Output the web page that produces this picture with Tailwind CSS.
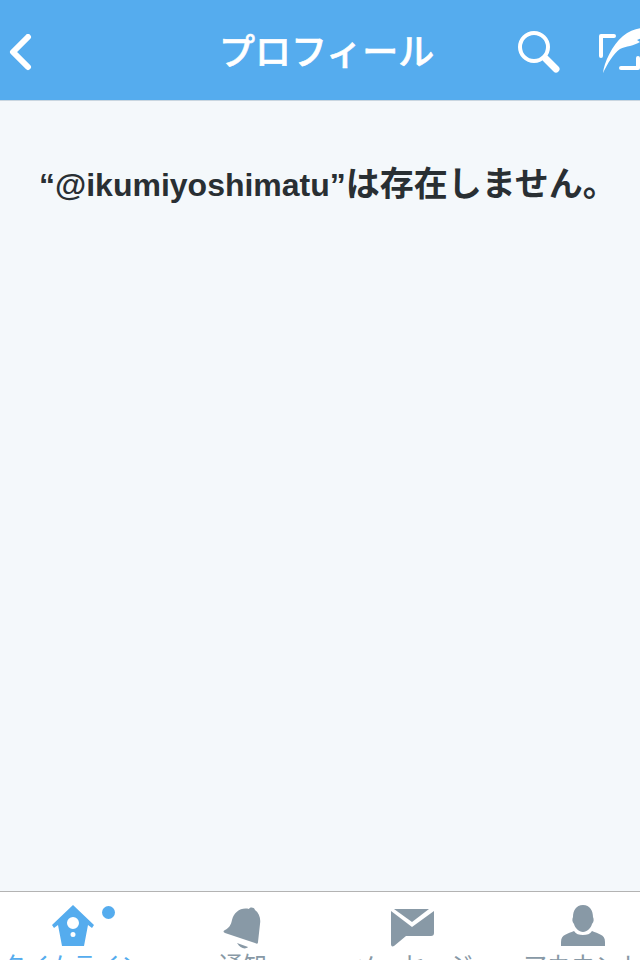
<!DOCTYPE html>
<html lang="ja">
<head>
    <meta charset="UTF-8">
    <meta name="viewport" content="width=device-width, initial-scale=1.0">
    <title>プロフィール</title>
    <script src="https://cdn.jsdelivr.net/npm/@tailwindcss/browser@4"></script>
</head>
<body class="h-[960px] w-[640px] overflow-hidden flex flex-col bg-[#f4f8fb] font-['Liberation_Sans','Noto_Sans_CJK_JP',sans-serif]">
    <header class="h-[101px] shrink-0 flex items-center bg-[#55acee] border-b border-[#c9d6e0] overflow-hidden">
        <svg viewBox="0 0 26 38" class="w-[26px] h-[38px] ml-[7px] mt-[5px] shrink-0">
            <path d="M21 3 L6 18 L21 33" fill="none" stroke="#fff" stroke-width="6" stroke-linecap="round" stroke-linejoin="round" />
        </svg>
        <h1 class="w-[216px] ml-[186px] mt-[6px] shrink-0 text-[36px] leading-[40px] font-medium [-webkit-text-stroke:0.6px_white] text-white whitespace-nowrap">プロフィール</h1>
        <svg viewBox="0 0 44 44" class="w-[44px] h-[44px] ml-[83px] mt-[5px] shrink-0">
            <circle cx="16" cy="16" r="14" fill="none" stroke="#fff" stroke-width="4" />
            <path d="M28 28 L38 38" fill="none" stroke="#fff" stroke-width="7" stroke-linecap="round" />
        </svg>
        <svg viewBox="0 0 44 46" class="w-[44px] h-[46px] ml-[36px] mt-[1px] shrink-0 overflow-visible">
            <path d="M16 8 H3 V28" fill="none" stroke="#fff" stroke-width="4" stroke-linecap="round" stroke-linejoin="round" />
            <path d="M23 40 H40 V30" fill="none" stroke="#fff" stroke-width="4" stroke-linecap="round" stroke-linejoin="round" />
            <path d="M5 45 C6 35 14 17 25 8 C31 3 38 1 44 0 V10 L39 12 L42 14 C36 18 28 18 22 21 C15 26 10 35 5 45 Z" fill="#fff" />
        </svg>
    </header>

    <main class="flex-1 pt-[63px] pl-[39px]">
        <p class="text-[32px] leading-[40px] font-bold text-[#292f33] whitespace-nowrap">“@ikumiyoshimatu”<span class="text-[34px]">は存在しません。</span></p>
    </main>

    <nav class="h-[69px] shrink-0 bg-white border-t border-[#b3b3b3] overflow-hidden">
        <div class="w-[680px] ml-[-12px] grid grid-cols-4 pt-[13px] text-[24px] leading-[24px] text-[#8899a6] text-center whitespace-nowrap">
            <div class="relative flex flex-col items-center text-[#55acee]">
                <svg viewBox="0 0 44 42" class="w-[44px] h-[46px] pb-[4px]">
                    <path fill-rule="evenodd" d="M22 0 L43 20 L41 23 L37 20 L33 41 H11 L7 20 L3 23 L1 20 Z M22 12 A6 6 0 1 0 22 24 A6 6 0 1 0 22 12 Z M22 27 A2.5 2.5 0 1 0 22 32 A2.5 2.5 0 1 0 22 27 Z" fill="#55acee" />
                </svg>
                <span class="mt-[3px]">タイムライン</span>
                <span class="absolute left-[114px] top-[1px] w-[13px] h-[13px] rounded-full bg-[#55acee]"></span>
            </div>
            <div class="flex flex-col items-center">
                <svg viewBox="0 0 40 44" class="w-[40px] h-[46px] pt-[1px] pb-[1px]">
                    <path d="M26 3 C27 1 31 1 32 4 C36 7 38 12 37 18 L35 36 C35 38 34 38 32 37 L2 27 C0 26 0 25 2 24 C6 22 8 19 9 14 C11 6 18 1 26 3 Z" fill="#8899a6" />
                    <path d="M14 37 L25 41 C22 44 17 42 14 37 Z" fill="#8899a6" />
                </svg>
                <span class="mt-[3px]">通知</span>
            </div>
            <div class="flex flex-col items-center">
                <svg viewBox="0 0 44 38" class="w-[44px] h-[46px] pt-[4px] pb-[4px]">
                    <path d="M3 0 H38 L21 13 Z" fill="#8899a6" />
                    <path d="M0 2 L21 18 L43 2 V24 C43 26 42 27 40 27 H15 L3 37 C1 38 0 37 0 35 Z" fill="#8899a6" />
                </svg>
                <span class="mt-[3px]">メッセージ</span>
            </div>
            <div class="flex flex-col items-center">
                <svg viewBox="0 0 44 42" class="w-[44px] h-[46px] pb-[4px]">
                    <path d="M22 0 C29 0 32 6 32 12 C33 14 33 17 31 19 C30 23 26 27 22 27 C18 27 14 23 13 19 C11 17 11 14 12 12 C12 6 15 0 22 0 Z" fill="#8899a6" />
                    <path d="M13 26 C15 29 18 30 22 30 C26 30 29 29 31 26 C37 29 44 29 44 37 V41 H0 V37 C0 29 7 29 13 26 Z" fill="#8899a6" />
                </svg>
                <span class="mt-[3px]">アカウント</span>
            </div>
        </div>
    </nav>
</body>
</html>
